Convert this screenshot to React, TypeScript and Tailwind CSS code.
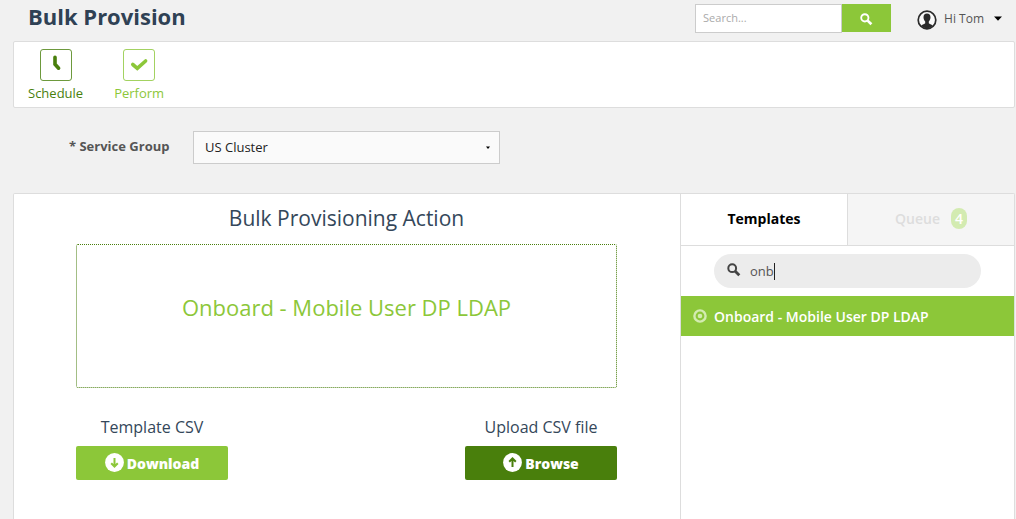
import { useState } from "react";

function SearchIcon({ className }: { className?: string }) {
  return (
    <svg viewBox="0 0 14 14" className={className} fill="none" stroke="currentColor" aria-hidden="true">
      <circle cx="5.2" cy="5.2" r="3.9" strokeWidth="2" />
      <path d="M8.2 8.2 L12.3 12.2" strokeWidth="2.9" />
    </svg>
  );
}

function UserIcon() {
  return (
    <svg viewBox="0 0 20 20" className="size-5" aria-hidden="true">
      <circle cx="10" cy="10" r="8.8" fill="#fafafa" stroke="#2b2b2b" strokeWidth="1.7" />
      <path
        d="M10 3.6c-2.3 0-3.6 1.6-3.5 3.8.1 1.9.8 3 1.7 4v1.8c-.6.9-2.6 1.2-3.9 2.2C5.600 17.200 7.700 18.300 10 18.300s4.400-1.100 5.700-2.900c-1.300-1-3.300-1.300-3.900-2.200v-1.800c.9-1 1.600-2.100 1.700-4 .1-2.200-1.200-3.800-3.500-3.800z"
        fill="#2b2b2b"
      />
    </svg>
  );
}

function ArrowDisc({ up }: { up?: boolean }) {
  return (
    <svg viewBox="0 0 19 19" className="mb-px size-[19px]" fill="none" aria-hidden="true">
      <circle cx="9.500" cy="9.500" r="9.400" fill="#fff" />
      <path
        d={up ? "M9.500 14V5.600M6.200 8.800L9.500 5.500L12.800 8.800" : "M9.500 5V13.400M6.200 10.200L9.500 13.500L12.800 10.200"}
        stroke="currentColor"
        strokeWidth="2"
      />
    </svg>
  );
}

function Step({ label, className, path }: { label: string; className: string; path: string }) {
  return (
    <button type="button" className={`flex flex-col items-center ${className}`}>
      <span className="flex size-8 items-center justify-center rounded-[3px] border border-current/80">
        <svg
          viewBox="0 0 32 32"
          className="size-8 shrink-0"
          fill="none"
          stroke="currentColor"
          strokeLinecap="round"
          aria-hidden="true"
        >
          <path d={path} strokeWidth="3.600" />
        </svg>
      </span>
      <span className="mt-1 text-[13px] leading-4">{label}</span>
    </button>
  );
}

export default function App() {
  const [query, setQuery] = useState("onb");

  return (
    <div className="flex min-h-screen flex-col bg-[#f1f1f1] pr-px pl-[13px] font-['Open_Sans',sans-serif] text-[#555]">
      <header className="flex h-[41px] items-start justify-between pr-[13px] pl-[15px]">
        <h1 className="text-[22px] leading-8 font-bold text-[#2f4154]">Bulk Provision</h1>
        <div className="flex items-start pt-1">
          <form className="flex" onSubmit={(e) => e.preventDefault()}>
            <input
              type="search"
              aria-label="Search"
              placeholder="Search..."
              className="h-[29px] w-[147px] border border-[#ccc] bg-white px-[7px] pb-0.5 text-[11px] outline-none placeholder:text-[#aaa]"
            />
            <button
              type="submit"
              aria-label="Search"
              className="flex h-7 w-[49px] items-center justify-center bg-[#8cc739] pt-0.5 text-white"
            >
              <SearchIcon className="size-[13px]" />
            </button>
          </form>
          <button type="button" className="ml-[26px] flex h-8 items-center text-[12px] text-[#555]">
            <UserIcon />
            <span className="ml-[7px] pb-0.5">Hi Tom</span>
            <svg viewBox="0 0 8 5" className="mb-1 ml-[10px] h-[5px] w-2" aria-hidden="true">
              <path d="M0 0.500H8L4 4.800Z" fill="#000" />
            </svg>
          </button>
        </div>
      </header>

      <nav className="flex h-[67px] items-start gap-[31px] rounded-xs border border-[#ddd] bg-white px-[14px] pt-[7px]">
        <Step label="Schedule" className="text-[#497f0c]" path="M15 8.300V15.200L18.600 19.200" />
        <Step label="Perform" className="text-[#8cc739]" path="M9.800 15.500L14.300 19.300L22.600 12" />
      </nav>

      <div className="flex items-center py-[23px] pb-[29px] pl-14">
        <label htmlFor="service-group" className="w-[124px] pb-0.5 text-[13px] font-bold">
          * Service Group
        </label>
        <div className="relative w-[307px]">
          <select
            id="service-group"
            className="h-[33px] w-full appearance-none border border-[#ccc] bg-[#fafafa] px-[11px] text-[13px] text-[#222] outline-none"
          >
            <option>US Cluster</option>
          </select>
          <svg
            viewBox="0 0 4 3"
            className="pointer-events-none absolute top-[15px] right-[10px] h-[3px] w-1"
            aria-hidden="true"
          >
            <path d="M0 0.500H4L2 3Z" fill="#000" />
          </svg>
        </div>
      </div>

      <main className="flex flex-1 rounded-t-xs border border-b-0 border-[#ddd] bg-white">
        <section className="flex-1 pt-2 pr-[63px] pl-[62px]">
          <h2 className="text-center text-[21px] leading-8 text-[#34475a]">Bulk Provisioning Action</h2>
          <div className="mt-[10px] flex h-36 items-center justify-center rounded-xs border border-dotted border-[#497f0c] pb-[18px] text-[22px] text-[#8cc739]">
            Onboard - Mobile User DP LDAP
          </div>
          <div className="mt-[27px] flex justify-between">
            <div className="flex w-38 flex-col text-center">
              <h3 className="text-[16px] leading-6 text-[#34475a]">Template CSV</h3>
              <button
                type="button"
                className="mt-[7px] flex h-[34px] items-center justify-center gap-[3px] rounded-xs bg-[#8cc739] text-[#8cc739]"
              >
                <ArrowDisc />
                <span className="text-[14px] font-extrabold text-white">Download</span>
              </button>
            </div>
            <div className="flex w-38 flex-col text-center">
              <h3 className="text-[16px] leading-6 text-[#34475a]">Upload CSV file</h3>
              <button
                type="button"
                className="mt-[7px] flex h-[34px] items-center justify-center gap-[3px] rounded-xs bg-[#497f0c] text-[#497f0c]"
              >
                <ArrowDisc up />
                <span className="text-[14px] font-extrabold text-white">Browse</span>
              </button>
            </div>
          </div>
        </section>

        <aside className="w-[334px] border-l border-[#ddd]">
          <div role="tablist" className="flex h-[52px] border-b border-[#ddd] text-[14px]">
            <button role="tab" aria-selected="true" type="button" className="flex-1 pb-0.5 font-bold text-black">
              Templates
            </button>
            <button
              role="tab"
              aria-selected="false"
              type="button"
              className="flex flex-1 items-center justify-center gap-[11px] border-l border-[#ddd] bg-[#f5f5f5] pb-0.5 font-semibold text-[#ddd]"
            >
              Queue
              <span className="flex h-[21px] w-4 items-center justify-center rounded-full bg-[#d3ebb1] text-white">
                4
              </span>
            </button>
          </div>
          <label className="mx-[33px] my-2 flex h-[34px] items-center rounded-full bg-[#ececec] pl-[13px] text-[13px]">
            <SearchIcon className="mb-0.5 size-[14px] text-[#444]" />
            <input
              aria-label="Filter templates"
              value={query}
              onChange={(e) => setQuery(e.target.value)}
              className="ml-[9px] field-sizing-content bg-transparent pt-px caret-transparent outline-none"
            />
            <span className="h-[17px] w-px bg-[#222]" />
          </label>
          <button
            type="button"
            className="flex h-10 w-full items-center gap-[7px] bg-[#8cc739] pl-3 text-[14px] font-semibold text-white"
          >
            <svg viewBox="0 0 14 14" className="size-[14px]" fill="none" aria-hidden="true">
              <circle cx="7" cy="7" r="5.600" stroke="#d3ebb1" strokeWidth="2.400" />
              <circle cx="7" cy="7" r="2.300" fill="#d3ebb1" />
            </svg>
            Onboard - Mobile User DP LDAP
          </button>
        </aside>
      </main>
    </div>
  );
}
